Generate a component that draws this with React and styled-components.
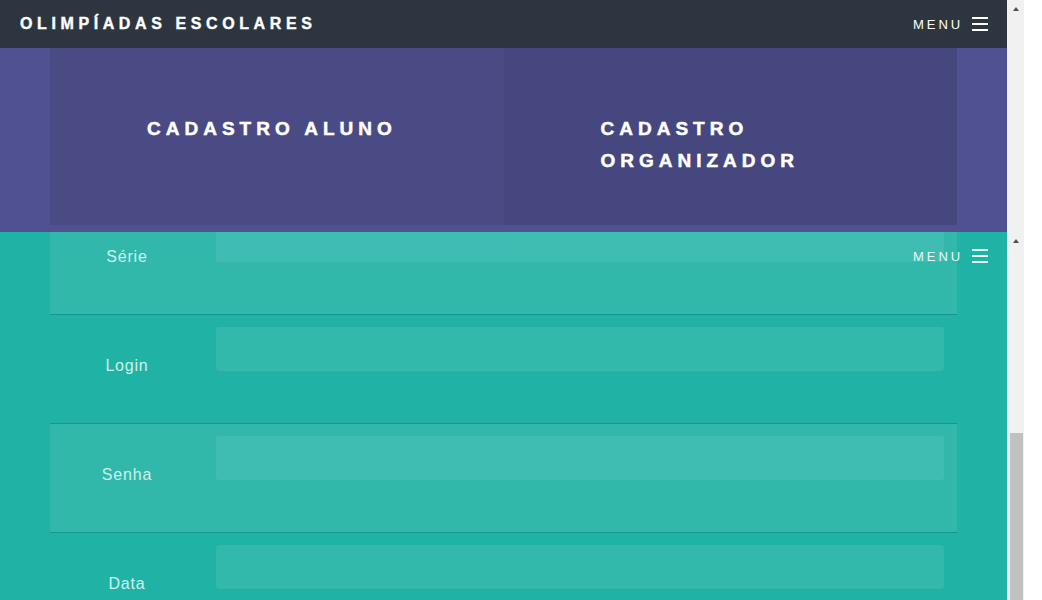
import React from "react";
import styled, { createGlobalStyle } from "styled-components";

const GlobalStyle = createGlobalStyle`
  html, body {
    margin: 0;
    padding: 0;
    background: #ffffff;
    overflow: hidden;
  }
  * {
    box-sizing: border-box;
  }
`;

const fields = [
  { label: "Série", shade: true },
  { label: "Login", shade: false },
  { label: "Senha", shade: true },
  { label: "Data", shade: false },
];

export default function App() {
  return (
    <>
      <GlobalStyle />
      <Screen>
        <Viewport>
          <Frame $height={232}>
            <FrameBody>
              <Navbar>
                <Brand>OLIMPÍADAS ESCOLARES</Brand>
                <MenuButton>
                  MENU
                  <Burger>
                    <span />
                    <span />
                    <span />
                  </Burger>
                </MenuButton>
              </Navbar>
              <Hero>
                <Panel>
                  <Cell>
                    <CellTitle>CADASTRO ALUNO</CellTitle>
                  </Cell>
                  <Cell $dark>
                    <CellTitle>CADASTRO ORGANIZADOR</CellTitle>
                  </Cell>
                </Panel>
              </Hero>
            </FrameBody>
            <ScrollTrack>
              <ArrowUp />
            </ScrollTrack>
          </Frame>

          <Frame $height={368}>
            <FrameBody $teal>
              <OverlayNav>
                <MenuButton $light>
                  MENU
                  <Burger $light>
                    <span />
                    <span />
                    <span />
                  </Burger>
                </MenuButton>
              </OverlayNav>
              <Form>
                {fields.map((f) => (
                  <Row key={f.label} $shade={f.shade}>
                    <Label>{f.label}</Label>
                    <Input $shade={f.shade} />
                  </Row>
                ))}
              </Form>
            </FrameBody>
            <ScrollTrack>
              <ArrowUp />
              <Thumb />
            </ScrollTrack>
          </Frame>
        </Viewport>
      </Screen>
    </>
  );
}

const Screen = styled.div`
  display: flex;
  width: 1042px;
  height: 600px;
  background: #ffffff;
`;

const Viewport = styled.div`
  width: 1024px;
  display: flex;
  flex-direction: column;
`;

const Frame = styled.div`
  display: flex;
  height: ${(p) => p.$height}px;
  overflow: hidden;
`;

const FrameBody = styled.div`
  position: relative;
  flex: 1;
  overflow: hidden;
  background: ${(p) => (p.$teal ? "#20b2a5" : "#4f5193")};
`;

const Navbar = styled.nav`
  height: 48px;
  display: flex;
  align-items: center;
  justify-content: space-between;
  padding: 0 19px 0 20px;
  background: #2d3640;
`;

const Brand = styled.div`
  font-family: "Liberation Sans", Arial, sans-serif;
  font-weight: 700;
  font-size: 16px;
  letter-spacing: 4.6px;
  color: #ffffff;
  -webkit-text-stroke: 0.4px #ffffff;
`;

const MenuButton = styled.div`
  display: flex;
  align-items: center;
  font-family: "Liberation Sans", Arial, sans-serif;
  font-size: 13px;
  letter-spacing: 2.9px;
  color: ${(p) => (p.$light ? "#e6fbf8" : "#ffffff")};
`;

const Burger = styled.div`
  display: flex;
  flex-direction: column;
  gap: 4px;
  margin-left: 9px;

  span {
    display: block;
    width: 16px;
    height: 2px;
    background: ${(p) => (p.$light ? "#e6fbf8" : "#ffffff")};
  }
`;

const OverlayNav = styled.div`
  position: absolute;
  top: 0;
  right: 19px;
  height: 48px;
  display: flex;
  align-items: center;
  z-index: 2;
`;

const Hero = styled.section`
  padding: 0 50px 7px;
`;

const Panel = styled.div`
  display: flex;
  height: 177px;
`;

const Cell = styled.div`
  flex: 1;
  padding: 65px 97px 0;
  background: ${(p) => (p.$dark ? "#46477f" : "#4a4a84")};
`;

const CellTitle = styled.h2`
  margin: 0;
  font-family: "Liberation Sans", Arial, sans-serif;
  font-weight: 700;
  font-size: 19px;
  line-height: 32px;
  letter-spacing: 5px;
  color: #ffffff;
  -webkit-text-stroke: 0.5px #ffffff;
`;

const Form = styled.div`
  margin: -26px 50px 0;
`;

const Row = styled.div`
  display: grid;
  grid-template-columns: 154px 1fr;
  column-gap: 12px;
  height: 109px;
  padding: 12px 13px 0 0;
  border-bottom: 1px solid #17978b;
  background: ${(p) => (p.$shade ? "#31b8ab" : "transparent")};
`;

const Label = styled.label`
  padding-top: 29px;
  text-align: center;
  font-family: "Liberation Sans", Arial, sans-serif;
  font-size: 16px;
  line-height: 20px;
  letter-spacing: 0.8px;
  color: #caf2ec;
`;

const Input = styled.div`
  height: 44px;
  border-radius: 3px;
  background: ${(p) => (p.$shade ? "#40bdb2" : "#33b8ac")};
`;

const ScrollTrack = styled.div`
  width: 17px;
  display: flex;
  flex-direction: column;
  align-items: center;
  background: #f1f1f1;
`;

const ArrowUp = styled.div`
  margin-top: 7px;
  width: 0;
  height: 0;
  border-left: 3.5px solid transparent;
  border-right: 3.5px solid transparent;
  border-bottom: 4px solid #505050;
`;

const Thumb = styled.div`
  margin-top: auto;
  width: 13px;
  height: 167px;
  margin-left: 1px;
  background: #c1c1c1;
`;
